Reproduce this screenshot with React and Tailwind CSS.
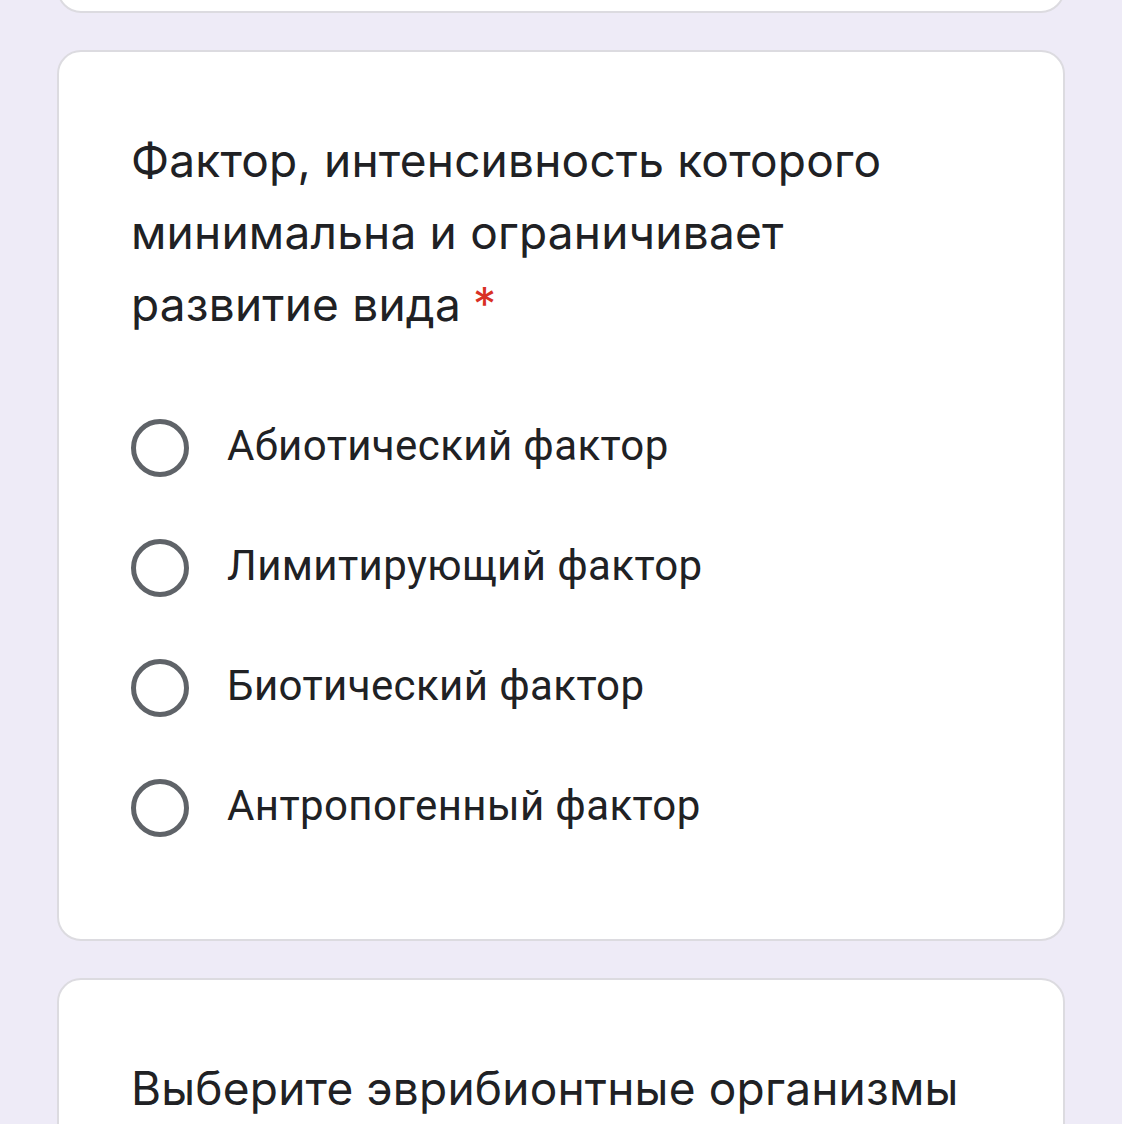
import React from "react";

const options = [
  "Абиотический фактор",
  "Лимитирующий фактор",
  "Биотический фактор",
  "Антропогенный фактор",
];

const Radio = () => (
  <span className="w-[58px] h-[58px] rounded-full border-[5px] border-[#5f6368] shrink-0" />
);

export default function App() {
  return (
    <div className="bg-[#eeebf7] flex flex-col gap-[37px] px-[57px] overflow-hidden h-[1124px]">
      <div className="shrink-0 -mt-[100px] h-[113px] bg-white border-2 border-[#dcdbe0] rounded-[24px]" />

      <div className="shrink-0 bg-white border-2 border-[#dcdbe0] rounded-[24px] px-[72px] pt-[72px] pb-[71px]">
        <h2 className="text-[46px] leading-[72px] text-[#202124] font-['Inter',sans-serif] tracking-[0.2px]">
          Фактор, интенсивность которого минимальна и ограничивает развитие вида
          <span className="text-[#d93025] ml-3">*</span>
        </h2>
        <div className="mt-[48px] flex flex-col">
          {options.map((o) => (
            <label key={o} className="flex items-center h-[120px] gap-[38px]">
              <Radio />
              <span className="text-[42px] leading-[48px] -mt-[4px] text-[#202124] font-['Roboto',sans-serif] tracking-[0.4px]">
                {o}
              </span>
            </label>
          ))}
        </div>
      </div>

      <div className="shrink-0 bg-white border-2 border-[#dcdbe0] rounded-[24px] px-[72px] pt-[72px] pb-[72px]">
        <h2 className="text-[46px] leading-[72px] text-[#202124] font-['Inter',sans-serif] tracking-[0.2px]">
          Выберите эврибионтные организмы
        </h2>
      </div>
    </div>
  );
}
